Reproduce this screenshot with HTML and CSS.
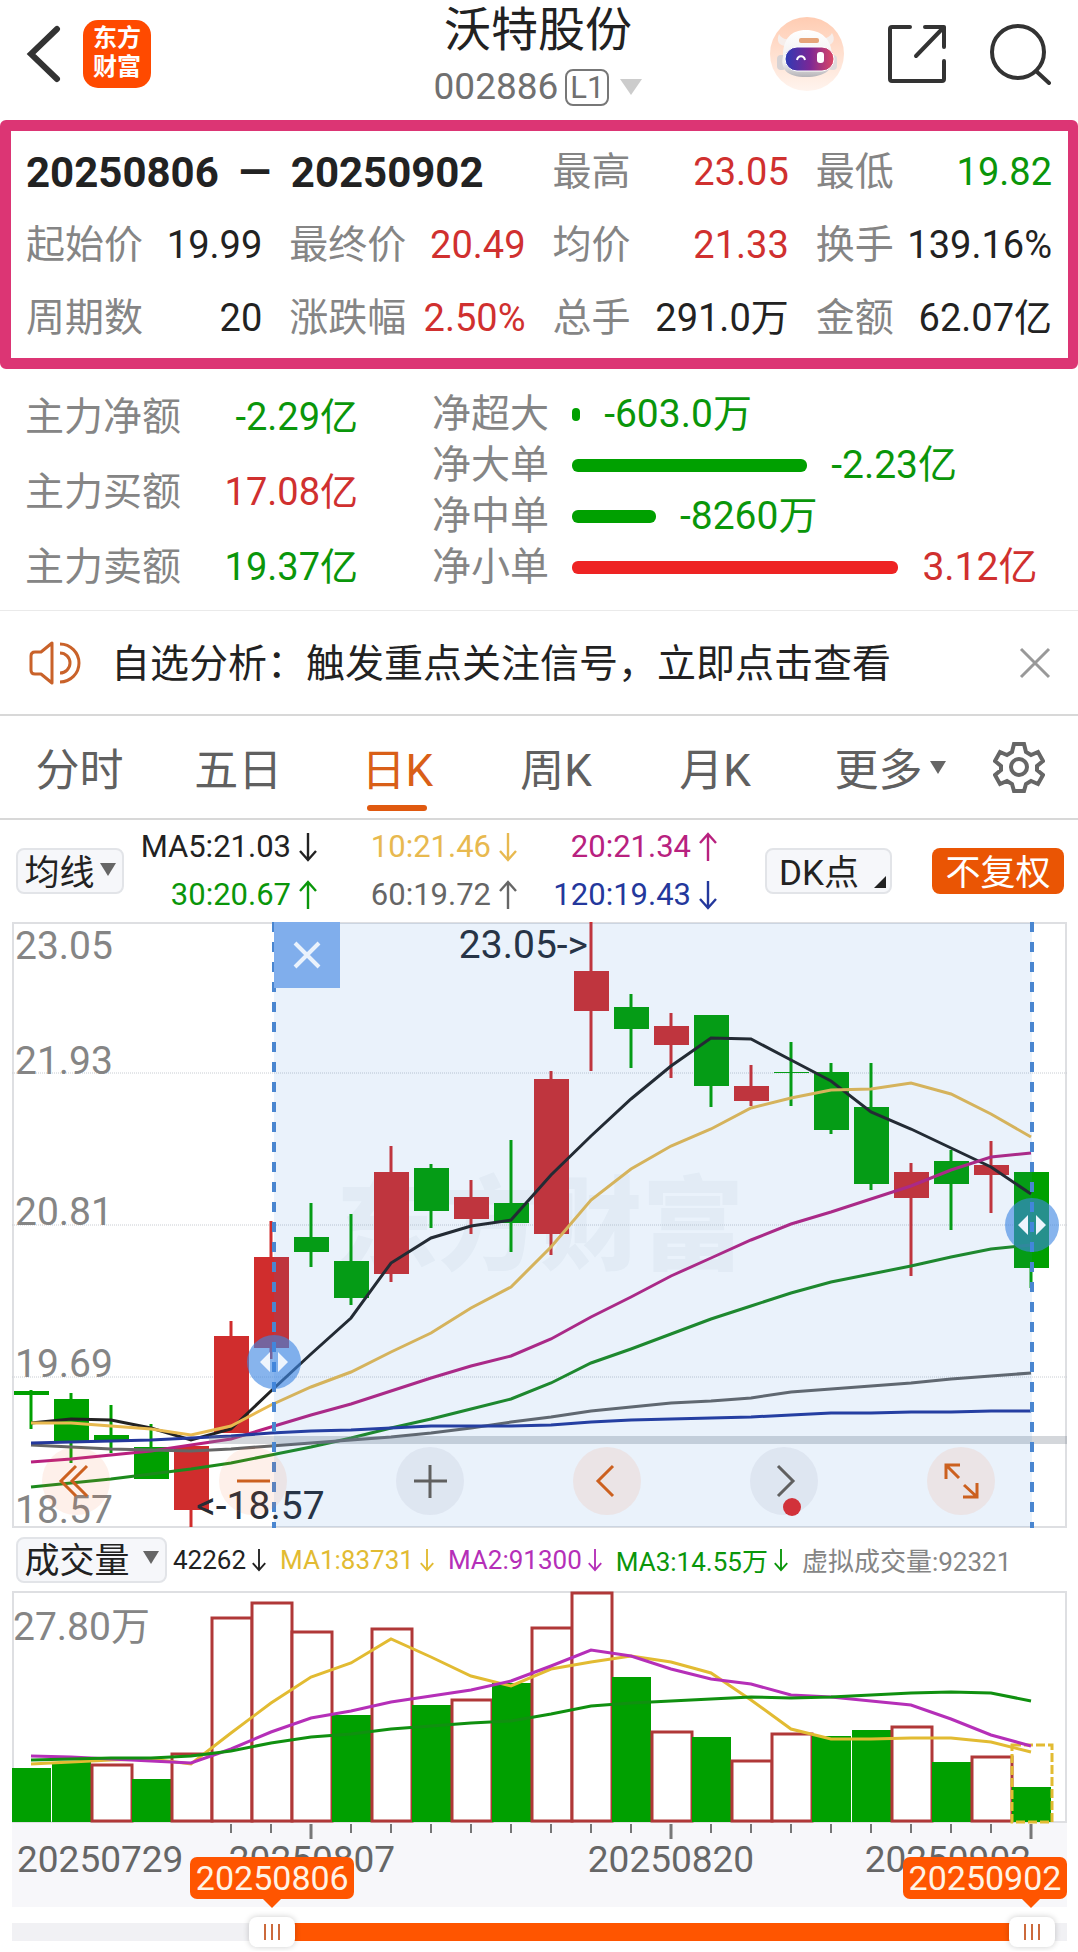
FILE: index.html
```html
<!DOCTYPE html>
<html lang="zh-CN">
<head>
    <meta charset="UTF-8">
    <meta name="viewport" content="width=device-width, initial-scale=1.0">
    <title>沃特股份 002886</title>
    <link rel="stylesheet" href="styles.css">
</head>
<body>

    <svg class="defs" aria-hidden="true">
        <symbol id="down" viewBox="0 0 18 30"><path d="M9 1v27M1 19l8 9 8-9" fill="none" stroke="currentColor" stroke-width="2.4"/></symbol>
        <symbol id="up" viewBox="0 0 18 30"><path d="M9 29V2M1 11l8-9 8 9" fill="none" stroke="currentColor" stroke-width="2.4"/></symbol>
    </svg>

    <header class="header">
        <div class="header-left">
            <button class="icon-btn" aria-label="返回">
                <svg width="36" height="60" viewBox="0 0 36 60"><path d="M32 5L6 30l26 25" fill="none" stroke="#333" stroke-width="6" stroke-linecap="round" stroke-linejoin="miter"/></svg>
            </button>
            <a class="logo" href="#">东方<br>财富</a>
        </div>
        <div class="header-title">
            <h1>沃特股份</h1>
            <button class="code">002886<span class="level">L1</span><span class="tri tri-light"></span></button>
        </div>
        <div class="header-right">
            <button class="icon-btn" aria-label="智能助手">
                <svg width="76" height="76" viewBox="0 0 76 76">
                    <defs>
                        <linearGradient id="halo" x1="0" y1="0" x2="0" y2="1"><stop offset="0" stop-color="#ffccb2"/><stop offset="1" stop-color="#fff4ee"/></linearGradient>
                        <linearGradient id="visor" x1="0" y1="0" x2="1" y2="0"><stop offset="0" stop-color="#2d3bb5"/><stop offset=".5" stop-color="#7a2796"/><stop offset="1" stop-color="#dd4864"/></linearGradient>
                        <linearGradient id="shell" x1="0" y1="0" x2="0" y2="1"><stop offset="0" stop-color="#fff"/><stop offset=".7" stop-color="#f0eeee"/><stop offset="1" stop-color="#b5b3b8"/></linearGradient>
                    </defs>
                    <circle cx="38" cy="38" r="37" fill="url(#halo)"/>
                    <path d="M10 18c-3 7 0 12 7 12l4-7c-5 1-9-1-11-5zM63 17c4 7 1 12-6 13l-5-8c5 1 9-1 11-5z" fill="#f6eeeb"/>
                    <rect x="8" y="39" width="9" height="15" rx="4" fill="#d6d2d4"/>
                    <rect x="59" y="39" width="9" height="15" rx="4" fill="#dedadb"/>
                    <path d="M14 40c0-17 8-26 23-26s26 9 26 26c3 13-7 21-26 21S11 53 14 40z" fill="url(#shell)"/>
                    <rect x="30" y="22" width="20" height="5" rx="2" fill="#e6a57a"/>
                    <rect x="16" y="31" width="49" height="24" rx="12" fill="url(#visor)" stroke="#fff" stroke-width="1"/>
                    <path d="M28 44c1-5 7-5 8 0" fill="none" stroke="#fff" stroke-width="2"/>
                    <rect x="48" y="36" width="7" height="11" rx="3" fill="#fff"/>
                </svg>
            </button>
            <button class="icon-btn" aria-label="分享">
                <svg width="60" height="60" viewBox="0 0 60 60" fill="none" stroke="#333" stroke-width="4" stroke-linecap="round" stroke-linejoin="round"><path d="M23 3H5q-2 0-2 2v50q0 2 2 2h50q2 0 2-2V37M38 3h19v20M57 3L29 32"/></svg>
            </button>
            <button class="icon-btn" aria-label="搜索">
                <svg width="62" height="62" viewBox="0 0 62 62" fill="none" stroke="#333" stroke-width="4" stroke-linecap="round"><circle cx="29" cy="29" r="26"/><path d="M47 48l13 12"/></svg>
            </button>
        </div>
    </header>

    <main>
        <section class="summary">
            <div class="range"><span>20250806</span><span>—</span><span>20250902</span></div>
            <div class="stat"><span>最高</span><b class="red">23.05</b></div>
            <div class="stat"><span>最低</span><b class="green">19.82</b></div>
            <div class="stat"><span>起始价</span><b>19.99</b></div>
            <div class="stat"><span>最终价</span><b class="red">20.49</b></div>
            <div class="stat"><span>均价</span><b class="red">21.33</b></div>
            <div class="stat"><span>换手</span><b>139.16%</b></div>
            <div class="stat"><span>周期数</span><b>20</b></div>
            <div class="stat"><span>涨跌幅</span><b class="red">2.50%</b></div>
            <div class="stat"><span>总手</span><b>291.0万</b></div>
            <div class="stat"><span>金额</span><b>62.07亿</b></div>
        </section>

        <section class="flow">
            <div class="flow-main">
                <div class="stat"><span>主力净额</span><b class="green">-2.29亿</b></div>
                <div class="stat"><span>主力买额</span><b class="red">17.08亿</b></div>
                <div class="stat"><span>主力卖额</span><b class="green">19.37亿</b></div>
            </div>
            <div class="flow-bars">
                <div class="flow-row"><span>净超大</span><div class="bar-area green"><i class="bar" style="width: 1.7%"></i>-603.0万</div></div>
                <div class="flow-row"><span>净大单</span><div class="bar-area green"><i class="bar" style="width: 49%"></i>-2.23亿</div></div>
                <div class="flow-row"><span>净中单</span><div class="bar-area green"><i class="bar" style="width: 17.5%"></i>-8260万</div></div>
                <div class="flow-row"><span>净小单</span><div class="bar-area red"><i class="bar" style="width: 68%"></i>3.12亿</div></div>
            </div>
        </section>

        <section class="notice">
            <svg width="54" height="46" viewBox="0 0 54 46" fill="none" stroke="#c9622a" stroke-width="3" stroke-linejoin="round"><path d="M24 3v40L13 34H7q-4 0-4-4V16q0-4 4-4h6z"/><path d="M32 4a19 19 0 0 1 0 38M32 13a10 10 0 0 1 0 20"/></svg>
            <a href="#">自选分析：触发重点关注信号，立即点击查看</a>
            <button class="icon-btn" aria-label="关闭">
                <svg width="32" height="32" viewBox="0 0 32 32"><path d="M2 2l28 28M30 2L2 30" stroke="#999" stroke-width="3"/></svg>
            </button>
        </section>

        <nav class="tabs">
            <button>分时</button>
            <button>五日</button>
            <button class="active">日K</button>
            <button>周K</button>
            <button>月K</button>
            <button class="more">更多<span class="tri"></span></button>
            <button class="gear" aria-label="设置">
                <svg width="52" height="52" viewBox="0 0 52 52" fill="none" stroke="#666" stroke-width="4"><path d="M21 3h10l2 8 5 3 7-3 5 9-6 5v4l6 5-5 9-7-3-5 3-2 7H21l-2-7-5-3-7 3-5-9 6-5v-4l-6-5 5-9 7 3 5-3z"/><circle cx="26" cy="26" r="8"/></svg>
            </button>
        </nav>

        <section class="ma-bar">
            <button class="chip">均线<span class="tri"></span></button>
            <div class="ma-list">
                <span class="ma5">MA5:21.03<svg class="arrow"><use href="#down"/></svg></span>
                <span class="ma10">10:21.46<svg class="arrow"><use href="#down"/></svg></span>
                <span class="ma20">20:21.34<svg class="arrow"><use href="#up"/></svg></span>
                <span class="green">30:20.67<svg class="arrow"><use href="#up"/></svg></span>
                <span class="ma60">60:19.72<svg class="arrow"><use href="#up"/></svg></span>
                <span class="ma120">120:19.43<svg class="arrow"><use href="#down"/></svg></span>
            </div>
            <button class="chip chip-dk">DK点<span class="corner"></span></button>
            <button class="chip chip-orange">不复权</button>
        </section>

        <section class="chart">
            <svg id="kline" viewBox="12 922 1055 606"></svg>
            <button class="range-close" aria-label="关闭区间">
                <svg width="28" height="28" viewBox="0 0 28 28"><path d="M2 2l24 24M26 2L2 26" stroke="#eaf2fc" stroke-width="4"/></svg>
            </button>
            <button class="handle handle-start" aria-label="区间起点"><svg width="28" height="20" viewBox="0 0 28 20"><path d="M10 0v20L0 10zM18 0v20l10-10z" fill="#eef5fd"/></svg></button>
            <button class="handle handle-end" aria-label="区间终点"><svg width="28" height="20" viewBox="0 0 28 20"><path d="M10 0v20L0 10zM18 0v20l10-10z" fill="#eef5fd"/></svg></button>
            <div class="tools">
                <button aria-label="最前"><svg viewBox="0 0 68 68"><path d="M34 19L19 34l15 15M45 19L30 34l15 15"/></svg></button>
                <button aria-label="缩小"><svg viewBox="0 0 68 68"><path d="M18 34h33"/></svg></button>
                <button class="grey" aria-label="放大"><svg viewBox="0 0 68 68"><path d="M18 34h33M34 18v33"/></svg></button>
                <button aria-label="向左"><svg viewBox="0 0 68 68"><path d="M40 19L25 34l15 15"/></svg></button>
                <button class="grey" aria-label="向右"><svg viewBox="0 0 68 68"><path d="M28 19l15 15-15 15"/></svg><i class="dot"></i></button>
                <button aria-label="全屏"><svg viewBox="0 0 68 68"><path d="M33 18H19v14M20 19l12 12M36 50h14V36M49 49L37 38"/></svg></button>
            </div>
        </section>

        <section class="vol-bar">
            <button class="chip chip-vol">成交量<span class="tri"></span></button>
            <span>42262<svg class="arrow"><use href="#down"/></svg></span>
            <span class="vol1">MA1:83731<svg class="arrow"><use href="#down"/></svg></span>
            <span class="vol2">MA2:91300<svg class="arrow"><use href="#down"/></svg></span>
            <span class="green">MA3:14.55万<svg class="arrow"><use href="#down"/></svg></span>
            <span class="virtual">虚拟成交量:92321</span>
        </section>

        <section class="chart">
            <svg id="volume" viewBox="12 1591 1055 316"></svg>
            <output class="tag tag-start">20250806</output>
            <output class="tag tag-end">20250902</output>
        </section>

        <div class="slider">
            <input type="range" min="0" max="1000" value="235" aria-label="开始日期">
            <input type="range" min="0" max="1000" value="988" aria-label="结束日期">
        </div>
    </main>

    <script src="chart.js"></script>
</body>
</html>
```
FILE: styles.css
```css
* {
    box-sizing: border-box;
}

body {
    margin: 0;
    background: #fff;
    color: #222;
    font-family: Roboto, "Noto Sans CJK SC", sans-serif;
    font-size: 39px;
}

button {
    margin: 0;
    padding: 0;
    border: none;
    background: none;
    color: inherit;
    font: inherit;
    cursor: pointer;
}

svg {
    display: block;
}

a {
    color: inherit;
    text-decoration: none;
}

.defs {
    display: none;
}

.red {
    color: #d0302f;
}

.green {
    color: #0a960a;
}

/* header */
.header {
    display: grid;
    grid-template-columns: 1fr auto 1fr;
    height: 120px;
    padding: 0 27px 0 25px;
}

.header-left,
.header-right {
    display: flex;
    align-items: center;
    height: 107px;
}

.header-left {
    gap: 22px;
}

.header-right {
    justify-content: flex-end;
    gap: 42px;
}

.logo {
    width: 68px;
    height: 68px;
    padding-top: 4px;
    border-radius: 15px;
    background: #ff4a00;
    color: #fff;
    font-size: 24px;
    font-weight: bold;
    line-height: 29px;
    text-align: center;
}

.header-title {
    text-align: center;
}

h1 {
    margin: 0;
    font-size: 47px;
    font-weight: normal;
    line-height: 60px;
}

.code {
    display: flex;
    align-items: center;
    color: #707070;
    font-size: 37px;
    line-height: 54px;
}

.level {
    margin: 0 11px 0 7px;
    padding: 0 3px;
    border: 2px solid #777;
    border-radius: 8px;
    font-size: 31px;
    line-height: 33px;
}

.tri {
    display: inline-block;
    border: 8px solid transparent;
    border-top: 13px solid #666;
    border-bottom: none;
}

.tri-light {
    border-width: 16px 11px 0;
    border-top-color: #ccc;
}

/* interval summary */
.summary {
    display: grid;
    grid-template-columns: repeat(4, 1fr);
    column-gap: 27px;
    padding: 5px 16px 3px 15px;
    border: 11px solid #dc3574;
    border-right-width: 10px;
    border-radius: 6px;
    line-height: 73px;
}

.range {
    display: flex;
    grid-column: span 2;
    gap: 20px;
    font-size: 42px;
    font-weight: bold;
    white-space: nowrap;
}

.stat {
    display: flex;
    justify-content: space-between;
    white-space: nowrap;
}

.stat span,
.flow-row span {
    color: #858585;
}

.stat b {
    font-size: 38px;
    font-weight: normal;
}

/* money flow */
.flow {
    display: flex;
    gap: 74px;
    padding: 20px 26px 17px 25px;
    border-bottom: 1px solid #eaeaea;
    line-height: 51px;
}

.flow-main {
    display: flex;
    flex-direction: column;
    justify-content: space-between;
    width: 333px;
    padding-top: 3px;
}

.flow-bars {
    flex: 1;
}

.flow-row {
    display: flex;
    gap: 23px;
    white-space: nowrap;
}

.bar-area {
    display: flex;
    flex: 1;
    align-items: center;
    gap: 24px;
}

.bar {
    height: 13px;
    border-radius: 6px;
    background: #00a000;
}

.red .bar {
    background: #ee2323;
}

/* notice */
.notice {
    display: flex;
    align-items: center;
    height: 105px;
    padding: 0 27px 0 28px;
    border-bottom: 2px solid #d8d8d8;
}

.notice a {
    flex: 1;
    margin-left: 29px;
    padding-bottom: 6px;
    white-space: nowrap;
}

/* period tabs */
.tabs {
    display: flex;
    height: 104px;
    border-bottom: 2px solid #d8d8d8;
    color: #606060;
    font-size: 44px;
}

.tabs button {
    position: relative;
    flex: 161;
}

.tabs .active {
    color: #d95f18;
}

.tabs .active::after {
    content: "";
    position: absolute;
    left: 50%;
    bottom: 7px;
    width: 60px;
    height: 6px;
    margin-left: -30px;
    border-radius: 3px;
    background: #e0590f;
}

.tabs .more {
    display: flex;
    flex: 153;
    align-items: center;
    justify-content: flex-end;
    gap: 7px;
    padding-right: 14px;
}

.tabs .gear {
    display: flex;
    flex: 120;
    align-items: center;
    justify-content: center;
}

/* moving averages */
.ma-bar {
    display: flex;
    align-items: center;
    height: 102px;
    padding: 0 14px 0 16px;
}

.chip {
    display: flex;
    align-items: center;
    justify-content: center;
    gap: 5px;
    width: 108px;
    height: 46px;
    padding-bottom: 4px;
    border: 2px solid #e2e4e8;
    border-radius: 8px;
    background: #f6f7fa;
    font-size: 35px;
    white-space: nowrap;
}

.chip-dk {
    position: relative;
    justify-content: flex-start;
    width: 127px;
    margin-left: auto;
    padding-left: 12px;
}

.corner {
    position: absolute;
    right: 4px;
    bottom: 4px;
    border-left: 12px solid transparent;
    border-bottom: 12px solid #222;
}

.chip-orange {
    width: 132px;
    margin-left: 40px;
    border: none;
    background: #ea5504;
    color: #fff;
}

.ma-list {
    display: grid;
    grid-template-columns: 193px 200px 200px;
    font-size: 31px;
    line-height: 48px;
}

.ma-list span {
    display: flex;
    align-items: center;
    justify-content: flex-end;
    gap: 8px;
}

.arrow {
    width: 18px;
    height: 30px;
}

.ma10 {
    color: #e8b94f;
}

.ma20 {
    color: #b8217f;
}

.ma60 {
    color: #666;
}

.ma120 {
    color: #24389c;
}

/* charts */
.chart {
    position: relative;
    margin: 0 11px 0 12px;
}

.chart > svg {
    width: 100%;
    height: auto;
    overflow: visible;
}

.scale {
    fill: #858585;
    font-size: 39px;
}

.mark {
    fill: #262c36;
    font-size: 39px;
}

.axis {
    fill: #666;
    font-size: 37px;
}

.watermark {
    fill: #8295aa;
    fill-opacity: 0.07;
    font-size: 102px;
    font-weight: 900;
}

.range-close {
    display: flex;
    position: absolute;
    top: 0;
    left: 24.8%;
    align-items: center;
    justify-content: center;
    width: 66px;
    height: 66px;
    background: #80aeec;
}

.handle {
    display: flex;
    position: absolute;
    align-items: center;
    justify-content: center;
    width: 54px;
    height: 54px;
    margin: -27px 0 0 -27px;
    border-radius: 50%;
    background: rgba(62, 134, 226, 0.62);
}

.handle-start {
    top: 72.6%;
    left: 24.8%;
}

.handle-end {
    top: 50%;
    left: 96.7%;
}

.tools {
    display: flex;
    position: absolute;
    right: 6.8%;
    bottom: 13px;
    left: 2.8%;
    justify-content: space-between;
}

.tools button {
    position: relative;
    width: 68px;
    height: 68px;
    border-radius: 50%;
    background: rgba(245, 110, 50, 0.1);
    color: #cc601f;
}

.tools .grey {
    background: rgba(90, 90, 130, 0.08);
    color: #606060;
}

.tools svg {
    fill: none;
    stroke: currentColor;
    stroke-width: 3;
}

.dot {
    position: absolute;
    right: 17px;
    bottom: -1px;
    width: 18px;
    height: 18px;
    border-radius: 50%;
    background: #d2323a;
}

/* volume legend */
.vol-bar {
    display: flex;
    align-items: center;
    gap: 14px;
    height: 63px;
    padding: 0 16px;
    font-size: 26px;
    white-space: nowrap;
}

.vol-bar > span {
    display: flex;
    align-items: center;
    gap: 6px;
}

.vol-bar .arrow {
    width: 14px;
}

.chip-vol {
    gap: 13px;
    width: 151px;
    margin-right: -8px;
}

.vol1 {
    color: #e2bb32;
}

.vol2 {
    color: #b52fb8;
}

.virtual {
    color: #858585;
}

/* date tags and range slider */
.tag {
    position: absolute;
    bottom: 8px;
    width: 164px;
    border-radius: 7px;
    background: #ff5500;
    color: #fff3e6;
    font-size: 34px;
    line-height: 42px;
    text-align: center;
}

.tag::after {
    content: "";
    position: absolute;
    top: 100%;
    left: 50%;
    margin-left: -9px;
    border: 9px solid transparent;
    border-top-color: #ff5500;
    border-bottom: none;
}

.tag-start {
    left: 16.9%;
}

.tag-end {
    right: 0;
}

.tag-end::after {
    left: 78%;
}

.slider {
    position: relative;
    height: 44px;
    margin: 0 11px 0 12px;
    background: linear-gradient(90deg, #f1f1f4 24%, #ff5500 24%, #ff5500 97%, #f1f1f4 97%) center 16px / 100% 18px no-repeat;
}

.slider input {
    position: absolute;
    top: 10px;
    left: 0;
    width: 100%;
    height: 30px;
    margin: 0;
    background: none;
    appearance: none;
    pointer-events: none;
}

.slider input::-webkit-slider-thumb {
    width: 46px;
    height: 30px;
    border-radius: 8px;
    background:
        linear-gradient(#cc6a3c, #cc6a3c) 15px 7px / 2px 16px no-repeat,
        linear-gradient(#cc6a3c, #cc6a3c) 22px 7px / 2px 16px no-repeat,
        linear-gradient(#cc6a3c, #cc6a3c) 29px 7px / 2px 16px no-repeat,
        #fff;
    box-shadow: 0 0 6px rgba(0, 0, 0, 0.2);
    appearance: none;
    pointer-events: auto;
}
```
FILE: chart.js
```javascript
const RED = '#d02d2d';
const GREEN = '#00a000';
const STEP = 40;
const FIRST = 31;

// high, body top, body bottom, low, up/down
const candles = [
    [1390, 1391, 1395, 1429, 0], [1393, 1399, 1441, 1463, 0], [1405, 1435, 1440, 1453, 0],
    [1424, 1447, 1479, 1479, 0], [1446, 1446, 1510, 1527, 1], [1321, 1336, 1433, 1433, 1],
    [1221, 1257, 1348, 1359, 1], [1203, 1237, 1252, 1267, 0], [1214, 1261, 1298, 1305, 0],
    [1146, 1172, 1274, 1282, 1], [1164, 1168, 1211, 1228, 0], [1180, 1197, 1219, 1234, 1],
    [1140, 1203, 1223, 1252, 0], [1071, 1079, 1234, 1255, 1], [922, 971, 1011, 1071, 1],
    [994, 1007, 1029, 1068, 0], [1013, 1026, 1045, 1078, 1], [1015, 1015, 1086, 1107, 0],
    [1065, 1086, 1101, 1106, 1], [1042, 1072, 1073, 1106, 0], [1063, 1072, 1130, 1134, 0],
    [1063, 1107, 1184, 1190, 0], [1163, 1172, 1198, 1276, 1], [1150, 1161, 1184, 1230, 0],
    [1141, 1165, 1175, 1213, 1], [1172, 1172, 1268, 1288, 0]
];

const averages = [
    ['#222', [1423, 1419, 1420, 1428, 1440, 1429, 1391, 1354, 1318, 1263, 1238, 1226, 1220, 1175, 1136, 1099, 1066, 1038, 1039, 1060, 1081, 1112, 1129, 1148, 1167, 1194]],
    ['#e8b94f', [1423, 1423, 1426, 1429, 1435, 1426, 1405, 1387, 1372, 1352, 1333, 1308, 1287, 1247, 1200, 1169, 1146, 1129, 1108, 1098, 1090, 1089, 1083, 1094, 1114, 1137]],
    ['#b8217f', [1462, 1459, 1455, 1451, 1445, 1439, 1427, 1415, 1404, 1391, 1378, 1366, 1356, 1339, 1317, 1297, 1276, 1258, 1240, 1224, 1212, 1199, 1186, 1170, 1157, 1153]],
    ['#1c8a1c', [1487, 1483, 1479, 1474, 1469, 1463, 1455, 1447, 1438, 1428, 1419, 1409, 1399, 1383, 1363, 1349, 1334, 1319, 1306, 1293, 1282, 1274, 1266, 1257, 1249, 1245]],
    ['#666', [1445, 1447, 1449, 1450, 1451, 1449, 1446, 1443, 1440, 1437, 1433, 1428, 1422, 1417, 1411, 1407, 1403, 1401, 1398, 1392, 1389, 1386, 1383, 1379, 1376, 1373]],
    ['#24389c', [1443, 1442, 1441, 1440, 1438, 1436, 1433, 1431, 1430, 1428, 1426, 1426, 1426, 1425, 1422, 1420, 1419, 1418, 1417, 1415, 1413, 1413, 1412, 1412, 1411, 1411]]
];

const volumes = [1768, 1762, 1764, 1779, 1753, 1617, 1602, 1631, 1715, 1628, 1705, 1699, 1683,
    1627, 1592, 1677, 1731, 1737, 1760, 1733, 1736, 1730, 1726, 1762, 1756, 1787];

// volume colour, 1 = hollow red bar
const volumeUp = [0, 0, 1, 0, 1, 1, 1, 1, 0, 1, 0, 1, 0, 1, 1, 0, 1, 0, 1, 1, 0, 0, 1, 0, 1, 0];

const volumeAverages = [
    ['#e2bb32', [1764, 1762, 1760, 1759, 1764, 1733, 1703, 1677, 1663, 1639, 1657, 1676, 1686, 1669, 1662, 1656, 1662, 1673, 1700, 1729, 1739, 1739, 1738, 1738, 1742, 1752]],
    ['#b52fb8', [1756, 1757, 1759, 1761, 1763, 1749, 1732, 1718, 1711, 1702, 1696, 1690, 1681, 1666, 1650, 1656, 1669, 1679, 1684, 1695, 1697, 1701, 1705, 1719, 1735, 1746]],
    ['#109010', [1760, 1759, 1758, 1758, 1756, 1751, 1743, 1737, 1734, 1729, 1726, 1723, 1721, 1714, 1706, 1703, 1701, 1699, 1697, 1698, 1697, 1695, 1693, 1692, 1693, 1701]]
];

const rect = (x, y, w, h, attrs) => `<rect x="${x}" y="${y}" width="${w}" height="${h}" ${attrs}/>`;
const line = (x1, y1, x2, y2, attrs) => `<path d="M${x1} ${y1}L${x2} ${y2}" ${attrs}/>`;
const text = (x, y, cls, str, attrs = '') => `<text x="${x}" y="${y}" class="${cls}" ${attrs}>${str}</text>`;

function curve(color, ys) {
    const points = ys.map((y, i) => `${FIRST + i * STEP},${y}`).join(' ');
    return `<polyline points="${points}" fill="none" stroke="${color}" stroke-width="3"/>`;
}

function drawKline() {
    let out = rect(13, 923, 1053, 604, 'fill="#fff" stroke="#dedfe2" stroke-width="2"');
    out += text(336, 1262, 'watermark', '东方财富');

    [1073, 1225, 1377].forEach(y => {
        out += line(12, y, 1067, y, 'stroke="#c8ccd2" stroke-dasharray="1 1"');
    });

    [[959, '23.05'], [1074, '21.93'], [1225, '20.81'], [1377, '19.69'], [1523, '18.57']].forEach(([y, s]) => {
        out += text(15, y, 'scale', s);
    });

    candles.forEach(([high, top, bottom, low, up], i) => {
        const x = FIRST + i * STEP;
        const color = up ? RED : GREEN;
        out += line(x, high, x, low, `stroke="${color}" stroke-width="3"`);
        out += rect(x - 17, top, 35, bottom - top, `fill="${color}"`);
    });

    averages.forEach(([color, ys]) => out += curve(color, ys));

    out += rect(209, 1436, 858, 8, 'fill="#7a8490" fill-opacity=".32"');
    out += text(588, 958, 'mark', '23.05-&gt;', 'text-anchor="end"');
    out += text(196, 1519, 'mark', '&lt;-18.57');

    // selected interval
    out += rect(274, 923, 758, 604, 'fill="#2d7ddc" fill-opacity=".1"');
    [274, 1032].forEach(x => {
        out += line(x, 922, x, 1528, 'stroke="#4a86d0" stroke-width="4" stroke-dasharray="10 10"');
    });
    document.getElementById('kline').innerHTML = out;
}

function drawVolume() {
    let out = rect(13, 1592, 1053, 230, 'fill="#fff" stroke="#dedfe2" stroke-width="2"');
    out += rect(12, 1823, 1055, 84, 'fill="#f7f7fa"');
    out += text(13, 1640, 'scale', '27.80万');

    volumes.forEach((top, i) => {
        const x = 12 + i * STEP;
        if (volumeUp[i]) {
            out += rect(x, top + 1, STEP, 1820 - top, 'fill="#fff" stroke="#b03838" stroke-width="3"');
        } else {
            out += rect(x, top, 39, 1822 - top, `fill="${GREEN}"`);
        }
    });
    out += rect(1012, 1745, 40, 77, 'fill="none" stroke="#e2bb32" stroke-width="3" stroke-dasharray="9 3"');

    volumeAverages.forEach(([color, ys]) => out += curve(color, ys));

    for (let i = 5; i < 26; i++) {
        const x = FIRST + i * STEP;
        const major = i % 9 === 7;
        out += line(x, 1824, x, major ? 1839 : 1833, `stroke="#777" stroke-width="${major ? 3 : 2}"`);
    }

    out += text(17, 1872, 'axis', '20250729');
    out += text(312, 1872, 'axis', '20250807', 'text-anchor="middle"');
    out += text(671, 1872, 'axis', '20250820', 'text-anchor="middle"');
    out += text(1031, 1872, 'axis', '20250902', 'text-anchor="end"');
    document.getElementById('volume').innerHTML = out;
}

drawKline();
drawVolume();
```
